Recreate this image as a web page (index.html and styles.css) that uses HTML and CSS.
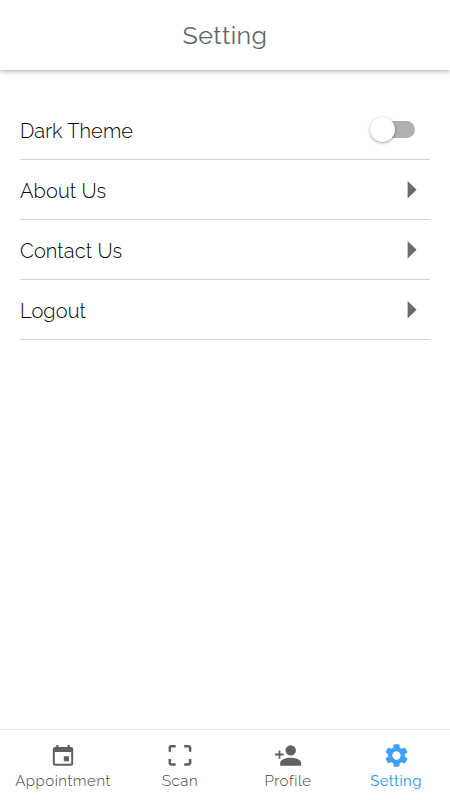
FILE: index.html
```
<!DOCTYPE html>
<html lang="en">
<head>
<meta charset="utf-8">
<title>Setting</title>
<link rel="stylesheet" href="styles.css">
</head>
<body>
<header class="header"><h1 class="title">Setting</h1></header>
<main class="list">
  <div class="row"><span class="label">Dark Theme</span><span class="switch"><span class="thumb"></span></span></div>
  <div class="row"><span class="label">About Us</span><svg class="arrow" viewBox="0 0 10 18"><path d="M.6 0L9.6 8.7L.6 17.4Z"/></svg></div>
  <div class="row"><span class="label">Contact Us</span><svg class="arrow" viewBox="0 0 10 18"><path d="M.6 0L9.6 8.7L.6 17.4Z"/></svg></div>
  <div class="row"><span class="label">Logout</span><svg class="arrow" viewBox="0 0 10 18"><path d="M.6 0L9.6 8.7L.6 17.4Z"/></svg></div>
</main>
<nav class="tabs">
  <div class="tab">
    <svg class="icon" viewBox="0 0 28 28"><path fill-rule="evenodd" d="M7.3 3h2.2v2h9V3h2.2v2h1.3a2.2 2.2 0 0 1 2.2 2.2v14.4a2.2 2.2 0 0 1-2.2 2.2H6a2.2 2.2 0 0 1-2.2-2.2V7.2A2.2 2.2 0 0 1 6 5h1.3zM5.8 10v11.8h16.4V10zM14.8 14.2h5.2v5.1h-5.2z"/></svg>
    <span class="name">Appointment</span>
  </div>
  <div class="tab">
    <svg class="icon" viewBox="0 0 28 28"><path class="corners" d="M3.8 9.8V5.7a1.5 1.5 0 0 1 1.5-1.5h4.4M18.2 4.2h4.4a1.5 1.5 0 0 1 1.5 1.5v4.1M24.1 17v4a1.5 1.5 0 0 1-1.5 1.5h-4.4M9.7 22.5H5.3a1.5 1.5 0 0 1-1.5-1.5v-4"/></svg>
    <span class="name">Scan</span>
  </div>
  <div class="tab">
    <svg class="icon" viewBox="0 0 28 28"><circle cx="16.7" cy="8.4" r="5.2"/><path d="M6.2 23.7v-2.6c0-3.5 6-5.3 10.5-5.3s10.5 1.8 10.5 5.3v2.6zM4.6 8.4h1.8v3.2h3.2v1.8H6.4v3.4H4.6v-3.4H1v-1.8h3.6z"/></svg>
    <span class="name">Profile</span>
  </div>
  <div class="tab active">
    <svg class="icon gear" viewBox="0 0 24 24"><path d="M19.43 12.98c.04-.32.07-.64.07-.98s-.03-.66-.07-.98l2.11-1.65c.19-.15.24-.42.12-.64l-2-3.46c-.12-.22-.39-.3-.61-.22l-2.49 1c-.52-.4-1.08-.73-1.69-.98l-.38-2.65C14.46 2.18 14.25 2 14 2h-4c-.25 0-.46.18-.49.42l-.38 2.65c-.61.25-1.17.59-1.69.98l-2.49-1c-.23-.09-.49 0-.61.22l-2 3.46c-.13.22-.07.49.12.64l2.11 1.65c-.04.32-.07.65-.07.98s.03.66.07.98l-2.11 1.65c-.19.15-.24.42-.12.64l2 3.46c.12.22.39.3.61.22l2.49-1c.52.4 1.08.73 1.69.98l.38 2.65c.03.24.24.42.49.42h4c.25 0 .46-.18.49-.42l.38-2.65c.61-.25 1.17-.59 1.69-.98l2.49 1c.23.09.49 0 .61-.22l2-3.46c.12-.22.07-.49-.12-.64zM12 15.7a3.7 3.7 0 1 1 0-7.4 3.7 3.7 0 0 1 0 7.4z"/></svg>
    <span class="name">Setting</span>
  </div>
</nav>
</body>
</html>
```
FILE: styles.css
```
* { box-sizing: border-box; }
body {
  margin: 0;
  height: 800px;
  display: flex;
  flex-direction: column;
  overflow: hidden;
  background: #fff;
  color: #000;
  font-family: Raleway, Lato, "Open Sans", sans-serif;
}
.header {
  height: 70px;
  flex: none;
  display: flex;
  align-items: center;
  justify-content: center;
  box-shadow: 0 1px 5px rgba(0, 0, 0, .36);
}
.title { margin: 0; color: #666; font-size: 25px; font-weight: 400; line-height: 30px; letter-spacing: .4px; }
.list { flex: 1; padding: 30px 20px 0; }
.row {
  height: 60px;
  display: flex;
  align-items: center;
  justify-content: space-between;
  border-bottom: 1px solid #d3d3d3;
}
.label { padding-top: 2px; font-size: 20px; font-weight: 300; line-height: 24px; letter-spacing: .1px; white-space: nowrap; }
.arrow { width: 10px; height: 18px; margin-right: 13px; fill: #6b6b6b; }
.switch {
  display: flex;
  align-items: center;
  width: 42px;
  height: 17px;
  margin-right: 15px;
  border-radius: 9px;
  background: #b0b0b0;
}
.thumb {
  flex: none;
  width: 25px;
  height: 25px;
  margin-left: -3px;
  border-radius: 50%;
  background: #fff;
  box-shadow: 0 1px 3px rgba(0, 0, 0, .4);
}
.tabs {
  height: 71px;
  flex: none;
  display: grid;
  grid-template-columns: 126px 108px 108px 108px;
  border-top: 1px solid #e8e8e8;
}
.tab { display: flex; flex-direction: column; align-items: center; padding-top: 12px; color: #606060; }
.active { color: #3fa0f5; }
.icon { width: 28px; height: 28px; flex: none; fill: currentColor; }
.gear { width: 27px; height: 27px; margin-bottom: 1px; }
.corners { fill: none; stroke: currentColor; stroke-width: 2.5; }
.name { padding-top: 1px; color: #444; font-size: 15px; font-weight: 300; line-height: 20px; letter-spacing: .55px; white-space: nowrap; }
.active .name { color: #2196f3; font-weight: 400; letter-spacing: .35px; }
```
